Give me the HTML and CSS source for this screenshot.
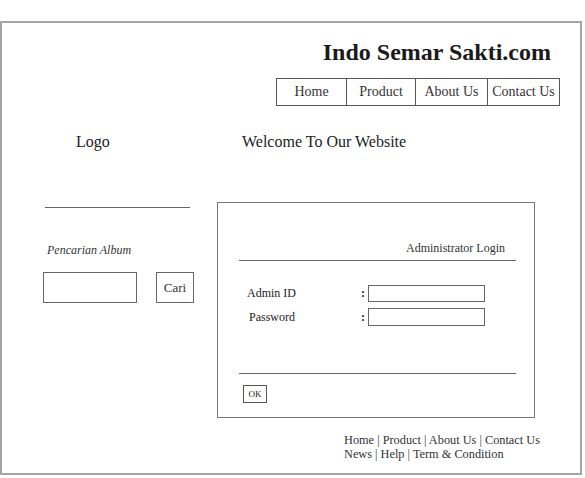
FILE: index.html
```html
<!DOCTYPE html>
<html lang="id">
<head>
	<meta charset="UTF-8">
	<title>Indo Semar Sakti.com</title>
	<link rel="stylesheet" href="styles.css">
</head>
<body>
	<div class="page">
		<!-- header -->
		<header>
			<h1 class="site-title">Indo Semar Sakti.com</h1>
			<ul class="nav">
				<li class="nav-home">Home</li>
				<li class="nav-product">Product</li>
				<li class="nav-about">About Us</li>
				<li class="nav-contact">Contact Us</li>
			</ul>
		</header>

		<div class="intro">
			<div class="logo">Logo</div>
			<div class="welcome">Welcome To Our Website</div>
		</div>

		<div class="main">
			<!-- kolom kiri: pencarian -->
			<div class="sidebar">
				<div class="side-line"></div>
				<p class="search-label">Pencarian Album</p>
				<div class="search">
					<input type="text" class="search-input">
					<button class="search-btn">Cari</button>
				</div>
			</div>

			<!-- kotak login admin -->
			<div class="login-box">
				<div class="login-head">Administrator Login</div>
				<div class="login-form">
					<label class="lbl">Admin ID</label>
					<span class="colon">:</span>
					<input type="text" class="field">
					<label class="lbl lbl-pwd">Password</label>
					<span class="colon">:</span>
					<input type="password" class="field field-pwd">
				</div>
				<div class="login-foot">
					<button class="ok-btn">OK</button>
				</div>
			</div>
		</div>

		<footer>
			<p>Home | Product | About Us | Contact Us</p>
			<p>News | Help | Term &amp; Condition</p>
		</footer>
	</div>
</body>
</html>
```

FILE: styles.css
```css
*{
	margin:0;
	padding:0;
}
body{
	background:#fff;
	font-family:"Liberation Serif","Times New Roman",serif;
	color:#222;
}
ul{
	list-style:none;
}
.page{
	margin-top:21px;
	width:578px;
	height:450px;
	border:2px solid #a5a5a5;
}

/* header */
header{
	padding-top:15px;
}
.site-title{
	font-size:24px;
	line-height:28px;
	font-weight:bold;
	text-align:right;
	padding-right:29px;
	color:#1a1a1a;
}
.nav{
	display:flex;
	justify-content:flex-end;
	margin-top:12px;
	padding-right:20px;
}
.nav li{
	box-sizing:border-box;
	height:28px;
	line-height:26px;
	border:1px solid #555;
	border-right:none;
	text-align:center;
	font-size:14px;
	color:#333;
}
.nav li:last-child{
	border-right:1px solid #555;
}
.nav-home{width:70px;}
.nav-product{width:69px;}
.nav-about{width:72px;}
.nav-contact{width:73px;}

.intro{
	display:flex;
	margin-top:26px;
	font-size:16px;
	line-height:19px;
}
.logo{
	padding-left:74px;
	width:166px;
}

/* isi utama */
.main{
	display:flex;
	margin-top:51px;
	padding-left:41px;
}
.sidebar{
	width:151px;
	margin-right:23px;
}
.side-line{
	margin:5px 0 0 2px;
	width:145px;
	border-top:1px solid #666;
}
.search-label{
	margin:35px 0 0 4px;
	font-size:12px;
	line-height:14px;
	font-style:italic;
	color:#333;
}
.search{
	display:flex;
	justify-content:space-between;
	margin-top:15px;
}
.search-input{
	box-sizing:border-box;
	width:94px;
	height:31px;
	border:1px solid #666;
}
.search-btn{
	box-sizing:border-box;
	width:38px;
	height:31px;
	border:1px solid #666;
	background:#fff;
	font-family:inherit;
	font-size:13px;
	color:#333;
}

.login-box{
	box-sizing:border-box;
	width:318px;
	height:216px;
	border:1px solid #777;
	padding:38px 18px 0 21px;
}
.login-head{
	font-size:12px;
	line-height:14px;
	text-align:right;
	padding:0 11px 5px 0;
	border-bottom:1px solid #666;
	color:#333;
}
.login-form{
	display:grid;
	grid-template-columns:114px 7px 117px;
	row-gap:6px;
	align-items:center;
	margin-top:24px;
	padding-left:8px;
	font-size:12px;
}
.lbl-pwd{
	padding-left:2px;
}
.colon{
	font-weight:bold;
}
.field{
	box-sizing:border-box;
	width:117px;
	height:17px;
	border:1px solid #666;
}
.field-pwd{
	height:18px;
}
.login-foot{
	margin-top:47px;
	padding-top:9px;
	border-top:1px solid #666;
}
.ok-btn{
	box-sizing:border-box;
	width:24px;
	height:18px;
	margin-left:4px;
	border:1px solid #555;
	background:#fff;
	font-family:inherit;
	font-size:9px;
	color:#222;
}

footer{
	margin-top:15px;
	padding-left:342px;
	font-size:12.3px;
	line-height:14px;
	color:#333;
}
```
